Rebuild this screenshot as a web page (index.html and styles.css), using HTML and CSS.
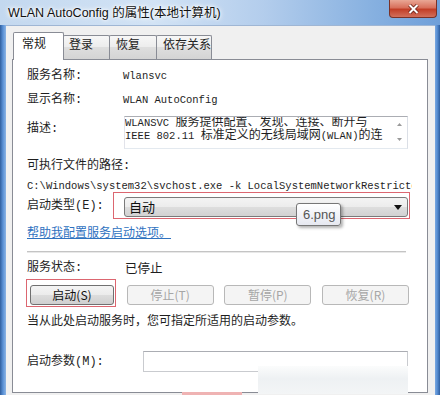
FILE: index.html
```html
<!DOCTYPE html>
<html lang="zh-CN">
<head>
    <meta charset="UTF-8">
    <title>WLAN AutoConfig 的属性(本地计算机)</title>
    <link rel="stylesheet" href="styles.css">
</head>
<body>

<div class="window">
    <div class="titlebar">
        <span class="title">WLAN AutoConfig 的属性(本地计算机)</span>
        <div class="close">
            <svg width="13" height="10" viewBox="0 0 13 10">
                <path d="M2.5 1 L10.5 9 M10.5 1 L2.5 9" stroke="#6a2016" stroke-width="3.6"/>
                <path d="M2.5 1 L10.5 9 M10.5 1 L2.5 9" stroke="#fff" stroke-width="2"/>
            </svg>
        </div>
    </div>

    <div class="client">
        <div class="tabs">
            <div class="tab active">常规</div>
            <div class="tab tab-login">登录</div>
            <div class="tab tab-recover">恢复</div>
            <div class="tab tab-deps">依存关系</div>
        </div>

        <div class="panel">
            <div class="row r-name">
                <span class="label">服务名称:</span>
                <span class="mono">Wlansvc</span>
            </div>
            <div class="row r-display">
                <span class="label">显示名称:</span>
                <span class="mono">WLAN AutoConfig</span>
            </div>
            <div class="row r-desc">
                <span class="label label-desc">描述:</span>
                <div class="desc">
                    <div class="desc-text">
                        <div><span class="mono">WLANSVC </span>服务提供配置、发现、连接、断开与</div>
                        <div><span class="mono">IEEE 802.11 </span>标准定义的无线局域网<span class="mono">(WLAN)</span>的连</div>
                    </div>
                    <div class="desc-scroll">
                        <svg width="5" height="3" viewBox="0 0 5 3"><path d="M0 3 L2.5 0 L5 3 Z" fill="#9a9a9a"/></svg>
                        <svg width="5" height="3" viewBox="0 0 5 3"><path d="M0 0 L2.5 3 L5 0 Z" fill="#9a9a9a"/></svg>
                    </div>
                </div>
            </div>
            <div class="row r-exe">可执行文件的路径:</div>
            <div class="path mono">C:\Windows\system32\svchost.exe -k LocalSystemNetworkRestricted</div>

            <div class="row r-type">
                <span class="label label-type">启动类型(E):</span>
                <div class="combo-wrap">
                    <div class="combo">
                        <span class="combo-text">自动</span>
                        <svg width="8" height="5" viewBox="0 0 8 5"><path d="M0 0 L8 0 L4 5 Z" fill="#111"/></svg>
                    </div>
                    <div class="tooltip">6.png</div>
                </div>
            </div>

            <div class="row r-link"><a class="help-link" href="#">帮助我配置服务启动选项。</a></div>
            <div class="separator"></div>

            <div class="row r-status">
                <span class="label">服务状态:</span>
                <span class="status">已停止</span>
            </div>

            <div class="btn-row">
                <div class="start-wrap">
                    <div class="btn btn-start">启动(S)</div>
                </div>
                <div class="btn disabled">停止(T)</div>
                <div class="btn disabled">暂停(P)</div>
                <div class="btn disabled">恢复(R)</div>
            </div>

            <div class="row r-hint">当从此处启动服务时，您可指定所适用的启动参数。</div>

            <div class="row r-params">
                <span class="label label-params">启动参数(M):</span>
                <div class="input"></div>
            </div>

            <div class="watermark"></div>
        </div>
    </div>
    <div class="smudge"></div>
</div>

</body>
</html>
```

FILE: styles.css
```css
* {
    box-sizing: border-box;
}
body {
    margin: 0;
    width: 440px;
    height: 395px;
    overflow: hidden;
    font-family: "Liberation Mono", "Noto Sans CJK SC", monospace;
    font-size: 12px;
    color: #1e1e1e;
}
.window {
    position: relative;
    height: 395px;
    display: flex;
    flex-direction: column;
    background: linear-gradient(90deg, #2f5e9e 0, #5a91d6 3px, #8cb4e4 6px, #8cb4e4 434px, #5a91d6 437px, #2f5e9e 440px);
}

/* title bar */
.titlebar {
    height: 25px;
    flex: none;
    display: flex;
    justify-content: space-between;
    align-items: flex-start;
    padding: 0 3px 0 8px;
    background: linear-gradient(90deg, #c3d8ef 0, #d2e3f5 35%, #b3cdec 60%, #86b0e0 85%, #6f9fd9 100%);
}
.title {
    font-family: "Liberation Sans", "Noto Sans CJK SC", sans-serif;
    font-size: 12.5px;
    line-height: 26px;
    color: #111;
    text-shadow: 0 0 6px #fff, 0 0 4px #fff, 0 0 2px #fff;
}
.close {
    width: 48px;
    height: 18px;
    display: flex;
    align-items: center;
    justify-content: center;
    border: 1px solid #7a3228;
    border-top: none;
    border-radius: 0 0 4px 4px;
    background: linear-gradient(#e9a795, #d8705c 45%, #c23e27 55%, #d2705c);
}

/* client area */
.client {
    flex: 1;
    display: flex;
    flex-direction: column;
    margin: 0 5px 0 6px;
    padding: 6px 7px 2px 6px;
    background: #f0f0f0;
    border-top: 1px solid #9fb6d4;
}
.tabs {
    height: 27px;
    flex: none;
    display: flex;
    align-items: flex-end;
    margin-left: 1px;
    font-family: "Noto Sans CJK SC", sans-serif;
}
.tab {
    height: 24px;
    width: 47px;
    margin-left: -1px;
    padding: 0 0 0 5px;
    line-height: 16px;
    border: 1px solid #898c95;
    border-bottom: none;
    border-radius: 2px 2px 0 0;
    background: linear-gradient(#f7f7f7, #ececec 50%, #dedede 50%, #d4d4d4);
    color: #222;
}
.tab.active {
    position: relative;
    z-index: 1;
    width: 51px;
    height: 28px;
    margin-left: 0;
    margin-bottom: -1px;
    padding: 2px 0 0 8px;
    background: #fff;
}
.tab-login { width: 47px; padding-left: 5px; }
.tab-recover { width: 48px; padding-left: 6px; }
.tab-deps { width: 56px; padding-left: 6px; }

.panel {
    position: relative;
    flex: 1;
    display: flex;
    flex-direction: column;
    padding: 4px 18px 0 14px;
    background: #fff;
    border: 1px solid #898c95;
}

/* rows */
.row {
    display: flex;
    align-items: center;
    line-height: 16px;
}
.label {
    width: 96px;
    flex: none;
}
.mono {
    font-size: 10.5px;
}
.r-name { margin-top: 4px; }
.r-display { margin-top: 8px; }
.r-desc {
    margin-top: 8px;
    align-items: flex-start;
}
.label-desc {
    width: 97px;
    padding-top: 5px;
}
.desc {
    width: 284px;
    height: 33px;
    display: flex;
    border: 1px solid #abadb3;
    border-color: #abadb3 #dbdfe6 #e3e9ef #e2e3ea;
}
.desc-text {
    flex: 1;
    line-height: 13px;
    white-space: nowrap;
    overflow: hidden;
}
.desc-scroll {
    width: 15px;
    flex: none;
    display: flex;
    flex-direction: column;
    justify-content: space-between;
    align-items: center;
    padding: 6px 0 7px;
}
.r-exe { margin-top: 9px; }
.path {
    margin-top: 6px;
    margin-right: -3px;
    line-height: 12px;
    white-space: nowrap;
    overflow: hidden;
}

.r-type { margin-top: 0; }
.label-type { width: 86px; }
.combo-wrap {
    position: relative;
    margin-right: -2px;
    padding: 4px 1px 1px 10px;
    border: 1px solid #dc6670;
}
.combo {
    width: 284px;
    height: 20px;
    display: flex;
    justify-content: space-between;
    align-items: center;
    padding: 0 5px 0 4px;
    border: 1px solid #7a7a7a;
    border-radius: 3px;
    background: linear-gradient(#f4f4f4, #ececec 50%, #dedede 50%, #d2d2d2);
}
.combo-text {
    font-family: "Noto Sans CJK SC", sans-serif;
    font-size: 13px;
    color: #111;
}
.tooltip {
    position: absolute;
    left: 182px;
    top: 10px;
    width: 45px;
    height: 23px;
    padding-left: 6px;
    line-height: 21px;
    font-family: "Liberation Sans", sans-serif;
    font-size: 13px;
    color: #555;
    border: 1px solid #767676;
    border-radius: 3px;
    background: linear-gradient(#fff, #e6e8f0);
    box-shadow: 2px 2px 3px rgba(0, 0, 0, 0.3);
}

.r-link { margin-top: 7px; }
.help-link {
    color: #2f72bf;
    text-decoration: underline;
}
.separator {
    margin-top: 9px;
    margin-right: 3px;
    height: 2px;
    border-top: 1px solid #c4c4c4;
    border-bottom: 1px solid #e8e8e8;
}
.r-status { margin-top: 7px; }
.status {
    padding-left: 2px;
    font-family: "Noto Sans CJK SC", sans-serif;
    font-size: 12.5px;
}

/* buttons */
.btn-row {
    margin-top: 3px;
    margin-left: -1px;
    display: flex;
    justify-content: space-between;
    align-items: flex-start;
}
.start-wrap {
    padding: 5px 1px 1px 3px;
    border: 1px solid #dc6670;
}
.btn {
    width: 87px;
    height: 20px;
    margin-top: 6px;
    line-height: 18px;
    text-align: center;
    font-family: "Noto Sans CJK SC", sans-serif;
    font-size: 12px;
    border: 1px solid #707070;
    border-radius: 3px;
}
.btn-start {
    width: 84px;
    margin-top: 0;
    color: #111;
    background: linear-gradient(#f4f4f4, #ebebeb 50%, #dddddd 50%, #cfcfcf);
}
.btn.disabled {
    color: #a6a6a6;
    border-color: #b8b8b8;
    background: #f4f4f4;
}

.r-hint { margin-top: 7px; }
.r-params { margin-top: 21px; }
.label-params { width: 116px; }
.input {
    width: 265px;
    height: 21px;
    border: 1px solid #c9cbcf;
    border-top-color: #abadb3;
}

/* faded patch left over in the screenshot */
.watermark {
    position: absolute;
    left: 245px;
    top: 306px;
    width: 150px;
    bottom: -2px;
    background: linear-gradient(#fbfcfc, #eef1f3 45%, #f3f5f6);
}
.smudge {
    position: absolute;
    left: 182px;
    top: 392px;
    width: 60px;
    height: 3px;
    background: #efb3b3;
}
```
